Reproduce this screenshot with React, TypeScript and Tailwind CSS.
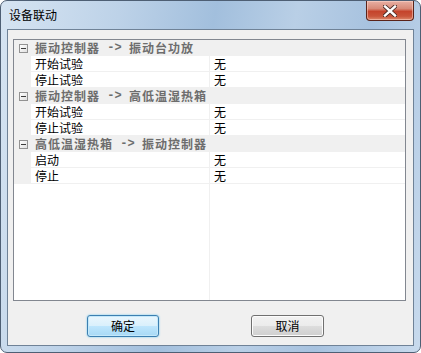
import React from 'react';

type Row = { name: string; value: string };
type Group = { from: string; to: string; rows: Row[] };

const groups: Group[] = [
  {
    from: '振动控制器',
    to: '振动台功放',
    rows: [
      { name: '开始试验', value: '无' },
      { name: '停止试验', value: '无' },
    ],
  },
  {
    from: '振动控制器',
    to: '高低温湿热箱',
    rows: [
      { name: '开始试验', value: '无' },
      { name: '停止试验', value: '无' },
    ],
  },
  {
    from: '高低温湿热箱',
    to: '振动控制器',
    rows: [
      { name: '启动', value: '无' },
      { name: '停止', value: '无' },
    ],
  },
];

const MinusBox: React.FC = () => (
  <div className="w-[9px] h-[9px] border border-[#929292] bg-[linear-gradient(135deg,#ffffff,#e0e0e0)] flex items-center justify-center">
    <div className="w-[5px] h-px bg-[#3c3c3c]" />
  </div>
);

const GroupHeader: React.FC<{ from: string; to: string }> = ({ from, to }) => (
  <div className="h-[16px] bg-[#f0f0f0] flex items-center">
    <div className="w-[21px] pl-[5px] flex items-center">
      <MinusBox />
    </div>
    <div className="flex items-center text-[12px] leading-[16px] font-bold text-[#6d6d6d] whitespace-nowrap">
      <span className="tracking-[1px]">{from}</span>
      <span className="inline-block w-[29px] text-center font-['Liberation_Mono',monospace]">-&gt;</span>
      <span className="tracking-[1px]">{to}</span>
    </div>
  </div>
);

const DataRow: React.FC<Row> = ({ name, value }) => (
  <div className="h-[16px] flex border-b border-[#f0f0f0]">
    <div className="w-[17px] bg-[#f0f0f0]" />
    <div className="w-[178px] pl-[4px] text-[12px] leading-[15px] text-black">{name}</div>
    <div className="w-px bg-[#f0f0f0]" />
    <div className="flex-1 pl-[4px] text-[12px] leading-[15px] text-black">{value}</div>
  </div>
);

const CloseButton: React.FC = () => (
  <div className="absolute top-0 right-[6px] w-[48px] h-[20px] rounded-b-[4px] border border-t-0 border-[#5a2319] bg-[linear-gradient(to_bottom,#e8b0a4_0%,#d88a78_40%,#c5442c_55%,#c9543a_80%,#dd8a6c_100%)] shadow-[inset_0_0_0_1px_rgba(255,220,210,0.5)] flex items-center justify-center">
    <svg width="14" height="12" viewBox="0 0 14 12">
      <path d="M2 1.5 L12 10.5 M12 1.5 L2 10.5" stroke="#4a2a24" strokeWidth="4.2" strokeLinecap="square" />
      <path d="M2 1.5 L12 10.5 M12 1.5 L2 10.5" stroke="#ffffff" strokeWidth="2.4" strokeLinecap="square" />
    </svg>
  </div>
);

export default function App() {
  return (
    <div className="w-[421px] h-[353px] bg-white font-['Noto_Sans_CJK_SC','Noto_Sans',sans-serif]">
      <div className="relative w-full h-full rounded-[7px] border border-[#4e5f74] bg-[linear-gradient(100deg,#d6e4f2_0%,#bdd2e8_25%,#a2bfdd_45%,#b9cfe6_62%,#a7c2df_78%,#c8daed_100%)] flex flex-col px-[6px] pb-[6px]">
        <div className="h-[28px] pl-[2px] flex items-center text-[12px] text-black">设备联动</div>
        <CloseButton />
        <div className="flex-1 border border-[#6f8297] bg-[#f0f0f0] flex flex-col">
          <div className="ml-[5px] mt-[9px] w-[393px] h-[262px] border border-[#828790] bg-white flex flex-col">
            {groups.map((g, gi) => (
              <div key={gi}>
                <GroupHeader from={g.from} to={g.to} />
                {g.rows.map((r, i) => (
                  <DataRow key={i} name={r.name} value={r.value} />
                ))}
              </div>
            ))}
            <div className="flex-1 flex">
              <div className="w-[195px]" />
              <div className="w-px bg-[#f0f0f0]" />
              <div className="flex-1" />
            </div>
          </div>
          <div className="mt-[14px] flex pl-[79px] gap-[92px]">
            <button className="w-[72px] h-[22px] rounded-[3px] border border-[#3c7fb1] bg-[linear-gradient(to_bottom,#eaf6fd_0%,#d9f0fc_50%,#bee6fd_50%,#a7d9f5_100%)] shadow-[inset_0_0_0_1px_#c4e8fa,0_0_2px_#5ec4f0] text-[12px] leading-[20px] text-black">
              确定
            </button>
            <button className="w-[73px] h-[22px] rounded-[3px] border border-[#707070] bg-[linear-gradient(to_bottom,#f2f2f2_0%,#ebebeb_50%,#dddddd_50%,#cfcfcf_100%)] shadow-[inset_0_0_0_1px_#fcfcfc] text-[12px] leading-[20px] text-black">
              取消
            </button>
          </div>
        </div>
      </div>
    </div>
  );
}
